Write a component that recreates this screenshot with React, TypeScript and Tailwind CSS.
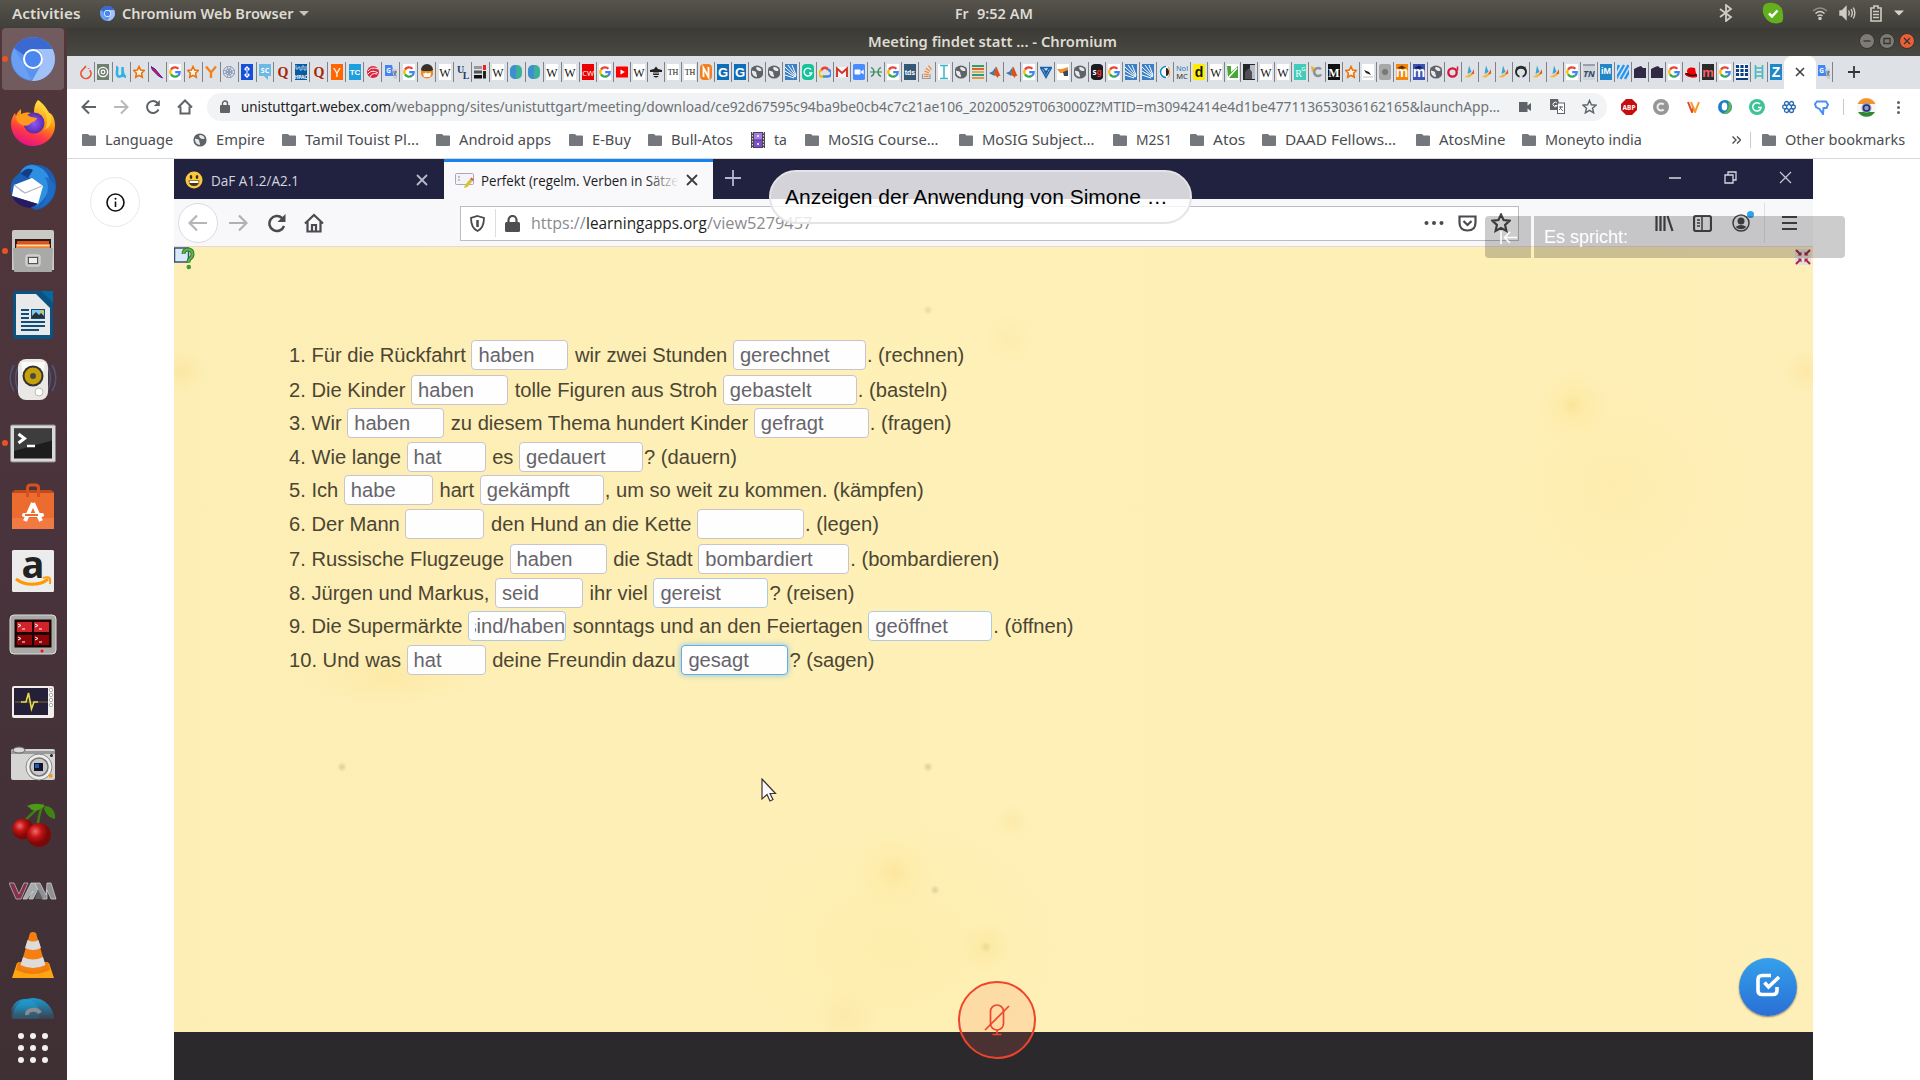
import React, { useLayoutEffect, useRef, useState } from "react";

const UI = "font-['Noto_Sans',sans-serif]";
const ARIAL = "font-['Liberation_Sans',sans-serif]";

/* One line of text, condensed or widened to the width of its box. */
function Fit({ className, children }: { className: string; children: React.ReactNode }) {
  const outer = useRef<HTMLSpanElement>(null);
  const inner = useRef<HTMLSpanElement>(null);
  const [scale, setScale] = useState(1);
  useLayoutEffect(() => {
    if (outer.current && inner.current && inner.current.offsetWidth > 0) {
      setScale(outer.current.clientWidth / inner.current.offsetWidth);
    }
  }, []);
  return (
    <span ref={outer} className={`block shrink-0 whitespace-nowrap ${className}`}>
      <span ref={inner} className="inline-block origin-left" style={{ transform: `scaleX(${scale})` }}>
        {children}
      </span>
    </span>
  );
}

/* ---------- favicons ---------- */

function Letter({ t, fill = "#111", bg, size = 13, serif, y = 12.5, weight = 700 }: { t: string; fill?: string; bg?: string; size?: number; serif?: boolean; y?: number; weight?: number }) {
  return (
    <>
      {bg && <rect width="16" height="16" fill={bg} />}
      <text x="8" y={y} textAnchor="middle" fontSize={size} fontWeight={weight} fill={fill} fontFamily={serif ? "Liberation Serif, serif" : "Liberation Sans, sans-serif"}>
        {t}
      </text>
    </>
  );
}

function Google() {
  return (
    <g fill="none" strokeWidth="2.3">
      <rect width="16" height="16" fill="#fff" />
      <path d="M11.4 4.8A4.7 4.7 0 0 0 4 5.6" stroke="#ea4335" />
      <path d="M4 5.6a4.7 4.7 0 0 0 0 4.8" stroke="#fbbc05" />
      <path d="M4 10.4a4.7 4.7 0 0 0 7 1.2" stroke="#34a853" />
      <path d="M8.2 8.2h4.5c0 1.4-.6 2.6-1.7 3.4" stroke="#4285f4" />
    </g>
  );
}

function Globe() {
  return (
    <g>
      <circle cx="8" cy="8" r="6.6" fill="#5f6368" />
      <path d="M3 6.500C4.500 7.200 7.500 7 7.300 9.200c-.1 1.400 1.100 1.800.7 3.600C5 13 2.600 10.200 3 6.500z" fill="#e8eaed" />
      <path d="M7.400 3.200c2-.4 4.400.8 5.300 3-1.500 1.400-3.500.9-4.200 0-.6-.8-2-1.600-1.100-3z" fill="#e8eaed" />
    </g>
  );
}

const icons: Record<string, React.ReactNode> = {
  flame: <path d="M8 2.200L4.400 6a5 5 0 1 0 7.300.2M10.600 4.300v.8" fill="none" stroke="#ee4c2c" strokeWidth="1.700" />,
  ring: <><rect width="16" height="16" fill="#6f806f" /><circle cx="8" cy="8" r="4.600" fill="none" stroke="#fff" strokeWidth="1.300" /><circle cx="8" cy="8" r="1.800" fill="none" stroke="#fff" strokeWidth="1.200" /></>,
  u: <path d="M3 3c2.500 0 .5 4 1 7 .5 3.500 4.500 3.500 5.500 0V3c0 5 0 9 3.500 10" fill="none" stroke="#2fb1e6" strokeWidth="2.500" />,
  star: <path d="M8 2.500l1.600 3.500 3.700.5-2.700 2.700.7 4L8 11.300l-3.300 1.900.7-4-2.700-2.700 3.700-.5z" fill="#fff3e6" stroke="#e8710a" strokeWidth="1.500" />,
  feather: <path d="M2 2.500l4 2.500 5 6 2.500 3-4-2-6-6z" fill="#d6124a" stroke="#4b1fa8" strokeWidth="1" />,
  g: <Google />,
  y: <path d="M3 2.500l5 6 5-6M8 8v6" fill="none" stroke="#f58220" strokeWidth="2.400" />,
  net: <g fill="none" stroke="#7d8fb0" strokeWidth=".8"><circle cx="8" cy="8" r="5.600" /><circle cx="8" cy="8" r="3" /><path d="M2.500 6l11 4M13.500 6l-11 4M6 2.500l4 11M10 2.500l-4 11" /></g>,
  diamond: <><rect width="16" height="16" fill="#1750d8" /><path d="M8 2l3 3-3 3-3-3zM8 8l3 3-3 3-3-3z" fill="#fff" /><path d="M8 4v3M8 9v3" stroke="#1750d8" /></>,
  sc: <><path d="M0 0h16v12h-5v4l-4-4H0z" fill="#6cb9e6" /><text x="8" y="9" textAnchor="middle" fontSize="7" fontWeight="700" fill="#fff">SC</text></>,
  q: <Letter t="Q" fill="#a82400" size={14} serif />,
  hpac: <><rect width="16" height="16" fill="#0b5a9d" /><path d="M3 1v4h2V3h2v3h2V2h2v4h2V2" fill="none" stroke="#9fd0f2" /><text x="8" y="15" textAnchor="middle" fontSize="4.800" fontWeight="700" fill="#fff">HPAC</text></>,
  yc: <Letter t="Y" fill="#fff" bg="#ff6600" size={12} weight={400} />,
  tc: <Letter t="TC" fill="#fff" bg="#1d9fe0" size={8} y={11} />,
  swirl: <><circle cx="8" cy="8" r="6" fill="#dc2339" /><path d="M3 7c3-4 7-3 10-2M3 10c3-4 7-3 10-1M5 13c1-3 4-4 7-3" stroke="#fff" fill="none" /></>,
  trans: <><path d="M2 1h7l2.500 11H2z" fill="#4285f4" /><path d="M9 5h5v10h-3z" fill="#c6cdd6" /><text x="5.500" y="9" textAnchor="middle" fontSize="6.500" fontWeight="700" fill="#fff">G</text><path d="M10 8h4M12.500 7c0 3-1 4-2 5M11 9l2.500 3" stroke="#5f6368" strokeWidth=".8" fill="none" /></>,
  monk: <><circle cx="8" cy="8" r="6.500" fill="#ef8a1c" /><path d="M2 6a6 6 0 0 1 12 0l-2 1H4z" fill="#35302c" /><path d="M4 9c2 2 2-2 4 0s2-2 4 0l-1 4H5z" fill="#fff" /></>,
  w: <Letter t="W" bg="#fff" size={12} serif weight={400} />,
  ul: <><text x="5.500" y="9" textAnchor="middle" fontSize="10" fontWeight="700" fill="#1d3d6e" fontFamily="Liberation Serif">U</text><text x="11" y="15" textAnchor="middle" fontSize="10" fontWeight="700" fill="#1d3d6e" fontFamily="Liberation Serif">L</text></>,
  bars: <><rect x="2" y="2" width="8" height="3" fill="#999" /><rect x="2" y="6.500" width="8" height="3" fill="#555" /><rect x="2" y="11" width="8" height="3.500" fill="#111" /><rect x="11" y="1" width="3" height="5" fill="#e22" /><rect x="11" y="7" width="3" height="7.500" fill="#222" /></>,
  blob: <><rect x="2" y="1" width="12" height="14" rx="5" fill="#3db09a" /><path d="M8 1q-6 0-6 6v2q0 6 6 6z" fill="#3f8ecf" /></>,
  cw: <><rect width="16" height="16" fill="#ea0000" /><text x="8" y="11.500" textAnchor="middle" fontSize="7.500" fill="#fff">CW</text></>,
  yt: <><rect x="1" y="2.500" width="14" height="11" rx="2" fill="#f00" /><path d="M6.500 5.500v5L10.800 8z" fill="#fff" /></>,
  bee: <><path d="M2 6l4-1 2-2.500L10 5l4 1v2H2z" fill="#222" /><ellipse cx="8" cy="9.500" rx="3" ry="4" fill="#222" /><path d="M5 9h6M5 11.500h6" stroke="#dee1e6" /></>,
  th: <Letter t="TH" bg="#fff" size={8} serif y={11} weight={400} />,
  n: <><rect x="2" width="12" height="16" rx="4" fill="#f08020" /><path d="M5.500 13V4l5 9V3" stroke="#fff" strokeWidth="1.800" fill="none" /></>,
  gb: <Letter t="G" fill="#fff" bg="#0e6eb8" size={13} y={12.800} />,
  globe: <Globe />,
  fan: <><rect width="16" height="16" fill="#3b7fc4" /><path d="M2 3l11 10M2 7l10 6M2 11l9 3M5 1l8 11M9 1l4 10" stroke="#fff" strokeWidth="1" /></>,
  gg: <><rect x="2" width="12" height="16" rx="4" fill="#15c39a" /><path d="M11 5.500a3.900 3.900 0 1 0 .8 3.500H9" fill="none" stroke="#fff" strokeWidth="1.400" /></>,
  cloud: <g fill="none" strokeWidth="2.400"><path d="M4.500 6.500C5.500 3 10 3 11 6" stroke="#ea4335" /><path d="M11 6a3 3 0 0 1 0 6.500H8" stroke="#4285f4" /><path d="M8 12.500H5.500" stroke="#34a853" /><path d="M5.500 12.500a3 3 0 0 1-1-6" stroke="#fbbc05" /></g>,
  gmail: <><rect x="2" y="3" width="12" height="10.500" fill="#f6f6f6" /><path d="M3 13V4.500L8 9l5-4.500V13" fill="none" stroke="#d93025" strokeWidth="1.900" /></>,
  zoom: <><rect x="1.500" width="13" height="16" rx="2.500" fill="#4a8cff" /><rect x="3.500" y="5.500" width="6" height="5" rx="1" fill="#fff" /><path d="M10 7.500l2.700-2v5L10 8.500z" fill="#fff" /></>,
  hx: <path d="M3 3.500c4 1.500 4 7.500 0 9M13 3.500c-4 1.500-4 7.500 0 9M2 8h12" fill="none" stroke="#2e8b57" strokeWidth="1.200" />,
  tds: <Letter t="tds" fill="#fff" bg="#355876" size={7} y={10.500} />,
  so: <g fill="none" strokeWidth="1.200"><path d="M3.500 10v4.500H11V10" stroke="#9a9a9a" /><path d="M5 12.500h4.500M4.800 10l4.800.8M5.500 7l4.500 2M7 4.200l4 3.200M9.500 1.500l3 4.200" stroke="#f48024" /></g>,
  i: <><rect width="16" height="16" fill="#fff" /><path d="M4 1.500h8M4 14.500h8M8 1.500v13" stroke="#37b8c4" strokeWidth="1.500" /></>,
  stripes: <><rect x="2" y="1" width="12" height="2" fill="#36a05a" /><rect x="2" y="4" width="12" height="2" fill="#e35d3a" /><rect x="2" y="7" width="12" height="2" fill="#d7b53a" /><rect x="2" y="10" width="12" height="2" fill="#2b9a9a" /><rect x="2" y="13" width="12" height="2" fill="#e39a3a" /></>,
  matlab: <><path d="M2 9l3.500-1.500L9 2.500l-2 9-2.500-1z" fill="#3c78b4" /><path d="M9 2.500c2 2 3 8 5 9.500-2-.5-2.500 0-3.500 2-1-2-2-3-4-2z" fill="#d9541a" /></>,
  tri: <path d="M2.500 3.500h11L8 13.500zM5.500 5l2.500 5 2.500-5M4 3.500l4 4.500 4-4.500" fill="none" stroke="#1764b0" strokeWidth="1.500" />,
  hand: <><rect width="16" height="16" fill="#fff" /><path d="M2 5h5l6-2v3l-3 3H5z" fill="#f0932b" /><path d="M8 8l5-2v6H9z" fill="#39485a" /></>,
  sg: <><rect x="1.500" width="13" height="16" rx="4.500" fill="#1c1c22" /><text x="8" y="10.500" textAnchor="middle" fontSize="8" fontWeight="700"><tspan fill="#fff">s</tspan><tspan fill="#e33">g</tspan></text></>,
  c: <><circle cx="8" cy="8" r="6" fill="#fff" /><path d="M9 2.500a5.500 5.500 0 1 0 0 11" stroke="#1c8cc7" strokeWidth="1.600" fill="none" /><path d="M9 4c4 0 4 8 0 8z" fill="#30211a" /><path d="M11 3c2.500 2.500 2.500 8 0 10.500" stroke="#e8882d" fill="none" /></>,
  nmc: <><text x="8" y="7" textAnchor="middle" fontSize="7.500" fill="#1f7bb5">Nol</text><text x="8" y="15" textAnchor="middle" fontSize="7.500" fill="#333">MC</text></>,
  d: <Letter t="d" bg="#ffed00" size={14} />,
  leaf: <><rect width="16" height="16" fill="#fff" /><path d="M2 2h4v6L13 2v12H3z" fill="#46a830" /><path d="M3 14L12 4" stroke="#fff" strokeWidth="1.500" /></>,
  photo: <><rect width="16" height="16" fill="#25262b" /><rect x="9" y="1" width="5" height="14" fill="#b9bdc5" /><path d="M4 15V8l4-4 3 4v7z" fill="#4e5055" /></>,
  rg: <><rect width="16" height="16" fill="#40ccb8" /><text x="6.500" y="13" textAnchor="middle" fontSize="10" fill="#fff" fontFamily="Liberation Serif">R</text><text x="11.500" y="6.500" textAnchor="middle" fontSize="6" fill="#fff">G</text></>,
  cg: <><path d="M12 5.200a4 4 0 1 0 .2 5.300" stroke="#8e9298" strokeWidth="2.600" fill="none" /><path d="M2 2l4 2-3 4z" fill="#f0b020" /></>,
  m: <Letter t="M" fill="#fff" bg="#111" size={12} serif />,
  pen: <><rect width="16" height="16" fill="#fff" /><path d="M4 6l5 2 2 3-5-2z" fill="#222" /><path d="M3 13h10" stroke="#999" strokeWidth=".6" /></>,
  blur: <><rect x="2" width="12" height="16" rx="2" fill="#a8a8a8" /><circle cx="8" cy="8" r="3" fill="#777" /></>,
  moo: <><Letter t="m" fill="#fff" bg="#f2870c" size={14} y={13} /><path d="M3 4l5-2.500L12 4 8 5z" fill="#5a2e00" /></>,
  mob: <><Letter t="m" fill="#fff" bg="#3e51b5" size={14} y={13} /><path d="M3 4l5-2.500L12 4 8 5z" fill="#152050" /></>,
  o: <><circle cx="7.500" cy="8.500" r="4.200" fill="none" stroke="#d8143a" strokeWidth="2.300" /><path d="M12.500 2.500v4" stroke="#d8143a" strokeWidth="1.500" /></>,
  bird: <><path d="M7 1.500l2.500 6.500L5.500 10z" fill="#38a6d0" /><path d="M2.500 13l8-4.500 2.500.5-6 4.500z" fill="#f4b73a" /><path d="M12 5v4.500l-3 1z" fill="#e0562b" /></>,
  git: <><circle cx="8" cy="7.800" r="5" fill="none" stroke="#24292e" strokeWidth="2" /><path d="M3.500 2.500v4h9v-4l-2.500 1H6z" fill="#24292e" /><path d="M5 5.500q3-1.500 6 0 1.200 4.500-3 4.500T5 5.500z" fill="#dee1e6" /><path d="M6.500 15v-4h3v4z" fill="#dee1e6" /></>,
  tn: <><rect width="16" height="16" fill="#d0d5dc" /><path d="M2 1h12" stroke="#5f6b7a" /><text x="8" y="13" textAnchor="middle" fontSize="9" fontStyle="italic" fontWeight="700" fill="#2d4a6b">TN</text></>,
  im: <Letter t="iM" fill="#fff" bg="#2187c6" size={9} y={10} />,
  hash: <path d="M1 15L9 1M5.500 15l8-14M10 15l5-9M1 7l3-6" stroke="#2196f3" strokeWidth="2.400" />,
  box: <path d="M2 5l4-2 3-1 2 2h3v10H2z" fill="#322a44" />,
  hat: <><path d="M2 9c0 3 5 5 12 4 1-2 0-3-2-4z" fill="#111" /><path d="M4 8c0-5 4-5 8-4l1 6c-3 2-7 1-9-2z" fill="#e00" /><path d="M2 9c1 3 7 5 12 3" stroke="#e00" strokeWidth="1.500" fill="none" /></>,
  mm: <Letter t="m" fill="#ff5a5f" bg="#2b2b2e" size={13} y={13} />,
  grid: <><rect width="16" height="16" fill="#fff" /><path d="M3.500 1v11M8 1v11M12.500 1v11" stroke="#0a3f86" strokeWidth="3.200" /><path d="M0 4.500h16M0 8.500h16M0 12.500h16" stroke="#fff" /><rect y="14" width="16" height="2" fill="#0a3f86" /></>,
  ladder: <path d="M4.500 1v14M11.500 1v14M4.500 4h7M4.500 8h7M4.500 12h7" stroke="#45b8c0" strokeWidth="1.600" fill="none" />,
  z: <Letter t="Z" fill="#fff" bg="#1f88c9" size={14} y={13} />,
};

const wideTabs = "flame ring u star feather g star y net diamond sc q hpac q yc tc swirl trans g monk w ul bars w blob blob w w".split(" ");
const slimTabs = "cw g yt w bee th th n gb gb globe globe fan gg cloud gmail zoom hx g tds so i globe stripes matlab matlab g tri hand globe sg g fan fan c nmc d w leaf photo w w rg cg m star pen blur moo mob globe o bird bird bird git bird bird g tn im hash box box g hat mm g grid ladder z".split(" ");

function Fav({ k }: { k: string }) {
  return (
    <svg className="h-4 w-3 shrink-0" viewBox="0 0 16 16" preserveAspectRatio="xMidYMid slice">
      {icons[k]}
    </svg>
  );
}

function Chromium({ className }: { className: string }) {
  return (
    <svg className={className} viewBox="0 0 44 44">
      <circle cx="22" cy="22" r="22" fill="#5b92ee" />
      <path d="M3 11A22 22 0 0 1 41.500 12H22a10 10 0 0 0-9 6z" fill="#3a69d2" />
      <path d="M3 11l9.500 16L20 43A22 22 0 0 1 3 11z" fill="#6aa0f4" />
      <path d="M41.500 12A22 22 0 0 1 21 44l9.500-17A10 10 0 0 0 27 13l-5-1z" fill="#a2c1f9" />
      <circle cx="22" cy="22" r="10" fill="#fff" />
      <circle cx="22" cy="22" r="8" fill="#4a86f0" />
    </svg>
  );
}

/* ---------- dock ---------- */

const dock: { art: React.ReactNode; on?: boolean; active?: boolean }[] = [
  { on: true, active: true, art: <Chromium className="size-11" /> },
  {
    art: (
      <svg className="size-12" viewBox="0 0 48 48">
        <defs>
          <linearGradient id="ff" x1=".8" y1="0" x2=".4" y2="1"><stop offset="0" stopColor="#fff44f" /><stop offset=".45" stopColor="#ff980e" /><stop offset=".75" stopColor="#ff3647" /><stop offset="1" stopColor="#e31587" /></linearGradient>
          <radialGradient id="ffp"><stop offset="0" stopColor="#9059ff" /><stop offset="1" stopColor="#5b2ba8" /></radialGradient>
        </defs>
        <path d="M29 1c7 5 8 8 11 13 3 0 6 6 6 12 0 12-10 21-22 21S2 37 2 25c0-5 2-8 4-11l1 3c1-4 4-6 5-7v5c6-2 10-2 13 1 0-6 0-10 4-15z" fill="url(#ff)" />
        <circle cx="25" cy="24" r="10.500" fill="url(#ffp)" />
        <path d="M7 17c6-3 11-2 15 1l6 1c-1 4-6 4-7 6-3 3-9 2-13-3z" fill="#ff9a1f" />
        <path d="M30 1c2 9 8 11 8 22 0 4-2 7-3 8 6-2 9-8 7-14S33 7 30 1z" fill="#ffd436" opacity=".75" />
      </svg>
    ),
  },
  {
    art: (
      <svg className="size-12" viewBox="0 0 48 48">
        <path d="M12 8C15 2 22 0 27 2c10-1 19 7 20 19 1 13-8 24-20 26L4 36C0 28 1 19 6 14z" fill="#1b5fb5" />
        <path d="M12 8c4-6 12-8 18-4 8 3 14 14 9 25-3 7-9 12-12 15 4-10 5-20-3-27-4-4-10-3-12-9z" fill="#2f8fe0" />
        <path d="M12 11c2-4 7-7 12-4l-5 8z" fill="#123e86" />
        <path d="M5 22l18-7 11 8-5 18L3 33z" fill="#fff" />
        <path d="M5 22l11 8 17-7M16 30l-5-3" fill="none" stroke="#b4b9c4" strokeWidth="1.200" />
        <path d="M3 33l26 8-8 4C12 44 6 40 3 33z" fill="#281a62" />
        <path d="M36 14c5 8 4 20-6 31 10-3 16-12 16-22-2-4-6-8-10-9z" fill="#1d6cc5" />
      </svg>
    ),
  },
  {
    on: true,
    art: (
      <svg className="size-12" viewBox="0 0 48 48">
        <path d="M3 5q0-2 2-2h38q2 0 2 2v38H3z" fill="#c9c9c7" />
        <path d="M6 12h36v12H6z" fill="#2c1a14" />
        <path d="M8 14h32v4H8z" fill="#d9531e" /><path d="M7 17h34v6H7z" fill="#f08039" /><path d="M8 18.500h32" stroke="#ffd9a8" strokeWidth="1.500" />
        <path d="M4 21h40l-1 23q0 1-1 1H6q-1 0-1-1z" fill="#a9a9a7" />
        <rect x="17" y="28" width="14" height="11" rx="2" fill="#b8b8b6" stroke="#e4e4e2" />
        <rect x="19.500" y="30.500" width="9" height="6" fill="#eee" stroke="#555" />
      </svg>
    ),
  },
  {
    art: (
      <svg className="size-12" viewBox="0 0 48 48">
        <path d="M6 0h26l12 12v33q0 3-3 3H7q-3 0-3-3V2z" fill="#0a5282" /><path d="M32 0h12v12z" fill="#0369a3" />
        <path d="M7 3h20l14 14v27H7z" fill="#e9e9e9" />
        <path d="M12 19h8M12 23h8M12 27h8M12 31h24M12 35h24M12 39h18" stroke="#104f7c" strokeWidth="2" />
        <rect x="22" y="18" width="14" height="10" fill="#104f7c" /><rect x="23" y="19" width="12" height="8" fill="#83c7ec" /><path d="M23 27v-2l4-4 3 3 2-2 3 3v2z" fill="#273238" /><circle cx="33" cy="20.500" r="1.500" fill="#f1c40f" />
      </svg>
    ),
  },
  {
    art: (
      <svg className="size-12" viewBox="0 0 48 48">
        <path d="M5 10c-5 8-5 18 0 26M9 12c-3 7-3 16 0 23M43 10c5 8 5 18 0 26M39 12c3 7 3 16 0 23" fill="none" stroke="#4d6698" strokeWidth="1.500" opacity=".7" />
        <rect x="9" y="4" width="30" height="41" rx="8" fill="#e9e8e4" /><path d="M12 7h24l-2 12H14z" fill="#fbfbfa" />
        <circle cx="24" cy="21" r="10.500" fill="#333" /><circle cx="24" cy="21" r="8.500" fill="#c5a00a" /><circle cx="24" cy="21" r="3" fill="#4a4a42" /><circle cx="30" cy="37" r="4" fill="#fff" stroke="#bbb" />
      </svg>
    ),
  },
  {
    on: true,
    art: (
      <svg className="size-12" viewBox="0 0 48 48">
        <rect x="1.500" y="6" width="45" height="37" rx="1.500" fill="#d9d9d7" stroke="#888" /><rect x="5" y="9.500" width="38" height="30" fill="#1d1d1d" /><path d="M5 9.500h38v12L5 32z" fill="#3d3d3d" />
        <path d="M9.500 15l6 4.500-6 4.500" fill="none" stroke="#fff" strokeWidth="3" /><path d="M18 27h8" stroke="#fff" strokeWidth="2.500" />
      </svg>
    ),
  },
  {
    art: (
      <svg className="size-12" viewBox="0 0 48 48">
        <path d="M3 9l3-2h36l3 2v37H3z" fill="#c04a1c" /><path d="M3 10h42v36H3z" fill="#ec6b2f" /><path d="M3 35h42v11H3z" fill="#f07a42" />
        <path d="M18.500 14V5q0-3 3-3h5q3 0 3 3v9" fill="none" stroke="#d9501e" strokeWidth="3" />
        <path d="M24 20l-8 18M24 20l8 18" stroke="#fff" strokeWidth="4" /><path d="M15 32h18" stroke="#fff" strokeWidth="4" strokeLinecap="round" /><path d="M16 32h13" stroke="#ec6b2f" strokeWidth="2" />
      </svg>
    ),
  },
  {
    art: (
      <svg className="size-12" viewBox="0 0 48 48">
        <rect x="3" y="3" width="42" height="42" rx="1.500" fill="#ececec" />
        <text x="24" y="31" textAnchor="middle" fontSize="38" fontWeight="700" fill="#222" fontFamily="Open Sans">a</text>
        <path d="M7 32c9 7 24 7 32 0" fill="none" stroke="#f90" strokeWidth="3" /><path d="M34 31c6-2 8-1 7 6" fill="none" stroke="#f90" strokeWidth="2" />
      </svg>
    ),
  },
  {
    art: (
      <svg className="size-12" viewBox="0 0 48 48">
        <rect x="1" y="4" width="46" height="39" rx="4" fill="#a9aaa6" stroke="#dcdcda" /><rect x="5.500" y="8.500" width="37" height="28" fill="#1b0203" />
        <path d="M8 11h15v10H8zM25 11h15v10H25z" fill="#d2232a" /><path d="M8 24h15v10H8zM25 24h15v10H25z" fill="#8d0308" />
        <path d="M9 13l3 1.500L9 16M26 13l3 1.500-3 1.500M9 26l3 1.500L9 29M26 26l3 1.500-3 1.500M13 18h3M30 18h3M13 31h3M30 31h3" stroke="#fff" fill="none" />
        <circle cx="33" cy="40" r="1.500" fill="#e11" />
      </svg>
    ),
  },
  {
    art: (
      <svg className="size-12" viewBox="0 0 48 48">
        <rect x="3" y="11" width="42" height="32" rx="2" fill="#f2efeb" /><rect x="5" y="13" width="34" height="27" fill="#252038" />
        <path d="M6 27h33" stroke="#7d6b2c" /><path d="M12 27h5l2.500-9 3 16 2.500-7h4" fill="none" stroke="#e6dc4a" strokeWidth="1.600" />
        <g fill="#fff" stroke="#8d8d8d" strokeWidth=".7"><circle cx="42" cy="15" r="1.700" /><circle cx="42" cy="20" r="1.700" /><circle cx="42" cy="25" r="1.700" /><circle cx="42" cy="30" r="1.700" /></g>
      </svg>
    ),
  },
  {
    art: (
      <svg className="size-12" viewBox="0 0 48 48">
        <rect x="2" y="10" width="44" height="31" rx="2" fill="#d5d5d3" /><path d="M2 12h44v3H2z" fill="#999" /><ellipse cx="10" cy="11" rx="6" ry="3" fill="#d7d7d5" stroke="#666" />
        <circle cx="30" cy="28" r="13" fill="#ededeb" stroke="#888" /><circle cx="30" cy="28" r="9" fill="#c8c8c6" stroke="#777" strokeWidth="1.500" /><rect x="25" y="24" width="9" height="8" fill="#10142a" /><rect x="26" y="25" width="4" height="4" fill="#2659b0" />
        <rect x="40" y="35" width="3.500" height="3.500" fill="#f0a020" /><circle cx="42.500" cy="16.500" r="1.500" fill="#222" />
      </svg>
    ),
  },
  {
    art: (
      <svg className="size-12" viewBox="0 0 48 48">
        <defs><radialGradient id="ch" cx=".35" cy=".35"><stop offset="0" stopColor="#f26a6a" /><stop offset=".5" stopColor="#c31414" /><stop offset="1" stopColor="#7d0808" /></radialGradient></defs>
        <path d="M15 19c6-7 11-12 18-16-2 6-4 12-4 19" fill="none" stroke="#3f7e12" strokeWidth="2.500" />
        <path d="M18 3c7-3 13-3 18 0-5 4-12 7-15 2z" fill="#4c9a16" /><path d="M36 3c7 0 11 6 10 13-6-1-9-5-11-10z" fill="#3d8412" />
        <circle cx="14" cy="26" r="10.500" fill="url(#ch)" /><circle cx="30" cy="32" r="12" fill="url(#ch)" />
      </svg>
    ),
  },
  {
    art: (
      <svg className="size-12" viewBox="0 0 48 48">
        <path d="M0 16h5l5 11 5-11h4l-7 16H7z" fill="#8a2f49" stroke="#aaa" strokeWidth=".9" />
        <path d="M14 32l8-16h4l3 6-5 10h-4l4-8-6 8z" fill="#a7aaac" stroke="#d6d8d9" strokeWidth=".7" />
        <path d="M26 16h5l6 12 1-12h4l5 16h-5l-4-9v9h-5z" fill="#8f9294" stroke="#d6d8d9" strokeWidth=".7" />
        <path d="M29 22l5 10h-8z" fill="#606365" />
      </svg>
    ),
  },
  {
    art: (
      <svg className="size-12" viewBox="0 0 48 48">
        <path d="M8 32h32l5 15H3z" fill="#ffa514" /><path d="M9 31h30l2 8q-17 8-34 0z" fill="#ef7d0e" />
        <path d="M21 2q3-2 6 0l10 35q-13 7-26 0z" fill="#f57f11" /><path d="M18.500 9q5.500 3 11 0l2.500 8q-8 4-16 0z" fill="#dcdcdc" /><path d="M14 26q10 5 20 0l2.500 8q-12.500 6-25 0z" fill="#dcdcdc" />
      </svg>
    ),
  },
];

function Dock() {
  return (
    <aside className="flex w-[67px] shrink-0 flex-col overflow-hidden bg-linear-to-b from-[#51373a] via-[#49333c] to-[#3f3034]">
      {dock.map((d, i) => (
        <div key={i} className="flex h-16 shrink-0 items-start">
          <div className="flex h-[62px] w-0.5 items-center">{d.on && <i className="relative z-10 ml-0.5 h-1.5 w-1.5 shrink-0 rounded-full bg-[#e95420]" />}</div>
          <div className={`flex h-[62px] w-[62px] items-center justify-center rounded ${d.active ? "bg-[#725b5e]" : ""}`}>{d.art}</div>
        </div>
      ))}
      <div className="ml-[9px] h-[31px] overflow-hidden pt-2">
        <svg className="h-12 w-12" viewBox="0 0 48 48">
          <defs><linearGradient id="fade" x1="0" y1="0" x2="0" y2="1"><stop offset="0" stopColor="#1c9ad0" /><stop offset=".5" stopColor="#1c9ad0" stopOpacity=".15" /></linearGradient></defs>
          <circle cx="16" cy="17" r="14" fill="url(#fade)" /><circle cx="24" cy="23" r="21" fill="url(#fade)" /><path d="M31 17c-3-5-14-4-13 2" fill="none" stroke="#8c8b90" strokeWidth="4" />
        </svg>
      </div>
      <div className="ml-[18px] mt-[14px] grid w-[30px] grid-cols-3 gap-x-1.5 gap-y-1.5">
        {Array.from({ length: 9 }, (_, i) => <i key={i} className="size-1.5 rounded-full bg-[#f2f1f0]" />)}
      </div>
    </aside>
  );
}

/* ---------- system bars ---------- */

function TopBar() {
  return (
    <header className={`flex h-7 shrink-0 items-center bg-linear-to-b from-[#57544c] to-[#403f3a] pb-0.5 pl-3 text-[14px] font-semibold text-[#dfdbd2] ${UI}`}>
      <Fit className="w-[68px]">Activities</Fit>
      <Chromium className="ml-5 size-[15px]" />
      <Fit className="ml-[7px] w-[172px]">Chromium Web Browser</Fit>
      <svg className="ml-[5px] h-[5px] w-2.5" viewBox="0 0 10 5"><path d="M0 0h10L5 5z" fill="#c8c4bc" /></svg>
      <div className="ml-[646px] flex w-[78px] justify-between"><Fit className="w-3.5">Fr</Fit><Fit className="w-[56px]">9:52 AM</Fit></div>
      <svg className="ml-[684px] size-[18px]" viewBox="0 0 18 18" fill="none" stroke="#cfccc4" strokeWidth="1.800"><path d="M3 5l11 8-5 4V1l5 4L3 13" /></svg>
      <svg className="ml-[27px] size-[22px]" viewBox="0 0 22 22"><path d="M3 2c7-3 15 0 17 5 1 3 2 10 0 13-6 3-14 1-17-5C0 11 0 5 3 2z" fill="#62b01e" /><path d="M7 11.500l3 3 5.500-6" fill="none" stroke="#fff" strokeWidth="2.500" /></svg>
      <svg className="ml-[28px] size-4" viewBox="0 0 16 16" fill="none" stroke="#cfccc4" strokeWidth="1.600"><path d="M1 6q7-6 14 0" opacity=".5" /><path d="M3.500 8.500q4.500-4 9 0" /><path d="M5.500 11q2.500-2 5 0" /><circle cx="8" cy="13.500" r="1" fill="#cfccc4" /></svg>
      <svg className="ml-[11px] h-4 w-[17px]" viewBox="0 0 17 16" fill="none" stroke="#cfccc4" strokeWidth="1.400"><path d="M1 6h2l4-4v12l-4-4H1z" fill="#cfccc4" /><path d="M9.500 5.500q1.500 2.500 0 5M12 4q2.500 4 0 8M14.300 2.500q3 5.500 0 11" /></svg>
      <svg className="ml-[14px] h-[17px] w-3" viewBox="0 0 12 17" fill="none" stroke="#cfccc4" strokeWidth="1.600"><path d="M1 3h3V1h4v2h3v13H1z" /><path d="M3 6.500h6M3 9.500h6M3 12.500h6" /></svg>
      <svg className="ml-[12px] h-[6px] w-2.5" viewBox="0 0 10 5"><path d="M0 0h10L5 5z" fill="#d8d4cc" /></svg>
    </header>
  );
}

function WinButton({ d, close }: { d: string; close?: boolean }) {
  return (
    <div className={`flex size-4 items-center justify-center rounded-full border border-[#35342f] ${close ? "bg-[#ea5f35]" : "bg-[#7d7b73]"}`}>
      <svg className="size-2.5" viewBox="0 0 10 10"><path d={d} fill="none" stroke="#35342f" strokeWidth="1.300" /></svg>
    </div>
  );
}

function TitleBar() {
  return (
    <div className={`flex h-7 shrink-0 items-center bg-linear-to-b from-[#3b3a36] to-[#4a4842] pb-0.5 pl-[801px] text-[14px] font-semibold text-[#dfdbd2] ${UI}`}>
      <Fit className="w-[249px]">Meeting findet statt ... - Chromium</Fit>
      <div className="ml-[742px] flex gap-1">
        <WinButton d="M1.500 5h7" /><WinButton d="M2 2.500h6v5H2z" /><WinButton d="M2 2l6 6M8 2l-6 6" close />
      </div>
    </div>
  );
}

/* ---------- browser chrome ---------- */

function TabStrip() {
  return (
    <div className="flex h-[33px] shrink-0 items-center bg-[#dee1e6] pb-0.5 pl-[10px]">
      {wideTabs.map((k, i) => (
        <div key={i} className="flex h-5 w-[17.960px] shrink-0 items-center border-r border-[#7f8288] pl-[2.500px]"><Fav k={k} /></div>
      ))}
      {slimTabs.map((k, i) => (
        <div key={i} className={`flex h-5 w-[16.980px] shrink-0 items-center border-r pl-0.5 ${i === slimTabs.length - 1 ? "border-transparent" : "border-[#7f8288]"}`}><Fav k={k} /></div>
      ))}
      <div className="-mb-0.5 flex h-[33px] w-[32px] shrink-0 items-center justify-center rounded-t-lg bg-white pb-0.5">
        <svg className="size-2.5" viewBox="0 0 10 10"><path d="M1 1l8 8M9 1l-8 8" stroke="#3c4043" strokeWidth="1.600" /></svg>
      </div>
      <div className="flex h-5 w-[17px] shrink-0 items-center border-r border-[#7f8288] pl-0.5"><Fav k="trans" /></div>
      <svg className="ml-[15px] size-3 shrink-0" viewBox="0 0 12 12"><path d="M6 0v12M0 6h12" stroke="#33363a" strokeWidth="1.800" /></svg>
    </div>
  );
}

function Cell({ children }: { children: React.ReactNode }) {
  return <div className="flex w-8 shrink-0 items-center justify-center">{children}</div>;
}

function Toolbar() {
  const s = { fill: "none", stroke: "#5f6368", strokeWidth: 2 };
  return (
    <div className={`flex h-9 shrink-0 items-center bg-white pl-1.5 text-[14px] ${UI}`}>
      <Cell><svg className="size-4" viewBox="0 0 16 16" {...s}><path d="M15 8H2M8 1.500L1.500 8 8 14.500" /></svg></Cell>
      <Cell><svg className="size-4 opacity-45" viewBox="0 0 16 16" {...s}><path d="M1 8h13M8 1.500L14.500 8 8 14.500" /></svg></Cell>
      <Cell><svg className="size-4" viewBox="0 0 16 16" {...s}><path d="M13.500 10.500A6 6 0 1 1 12.500 4L14 5.500" /><path d="M14.800 1v6h-6z" fill="#5f6368" stroke="none" /></svg></Cell>
      <Cell><svg className="size-4" viewBox="0 0 16 16" {...s}><path d="M1 8.500L8 1.500l7 7M3.500 7.500v7h9v-7" /></svg></Cell>
      <div className="ml-1.5 flex h-7 w-[1400px] shrink-0 items-center rounded-full bg-[#f1f3f4] pb-px pl-[13px]">
        <svg className="h-[13px] w-2.5" viewBox="0 0 10 13"><rect y="5" width="10" height="8" rx="1" fill="#5f6368" /><path d="M2.500 6V3.500a2.500 2.500 0 0 1 5 0V6" fill="none" stroke="#5f6368" strokeWidth="1.400" /></svg>
        <Fit className="ml-[11px] w-[150px] text-[#202124]">unistuttgart.webex.com</Fit>
        <Fit className="w-[1109px] text-[#6d7175]">/webappng/sites/unistuttgart/meeting/download/ce92d67595c94ba9be0cb4c7c21ae106_20200529T063000Z?MTID=m30942414e4d1be477113653036162165&launchApp…</Fit>
        <div className="ml-[9px] flex">
          <Cell><svg className="h-2.5 w-3" viewBox="0 0 12 10"><path d="M0 0h8.500v3.500L12 1v8L8.500 6.500V10H0z" fill="#5f6368" /></svg></Cell>
          <Cell><svg className="size-[15px]" viewBox="0 0 15 15"><path d="M0 0h8l2.500 11H0z" fill="#5f6368" /><rect x="7.500" y="4" width="7" height="10.500" fill="#fff" stroke="#5f6368" /><path d="M9 8h4M11 7q0 3-2 4M10 9l3 3" stroke="#5f6368" fill="none" /><path d="M7 4a2.200 2.200 0 1 0 .2 2.500H5" stroke="#fff" fill="none" /></svg></Cell>
          <Cell><svg className="size-[15px]" viewBox="0 0 16 16"><path d="M8 1.500l2 4.700 5 .4-3.800 3.300 1.200 4.900L8 12.200l-4.400 2.600 1.200-4.900L1 6.600l5-.4z" fill="none" stroke="#5f6368" strokeWidth="1.500" /></svg></Cell>
        </div>
      </div>
      <div className="ml-1.5 flex">
        <Cell><svg className="size-4" viewBox="0 0 16 16"><path d="M5 0h6l5 5v6l-5 5H5l-5-5V5z" fill="#c70d0d" /><text x="8" y="10.500" textAnchor="middle" fontSize="6.500" fontWeight="700" fill="#fff">ABP</text></svg></Cell>
        <Cell><svg className="size-4" viewBox="0 0 16 16"><circle cx="8" cy="8" r="8" fill="#969696" /><path d="M10.700 5.500a3.600 3.600 0 1 0 0 5" fill="none" stroke="#eee" strokeWidth="2" /></svg></Cell>
        <Cell><svg className="h-3 w-[13px]" viewBox="0 0 13 12" fill="none" strokeWidth="2"><path d="M1 1l4 10 1.500-5" stroke="#e8452c" /><path d="M4 1l4 10 4-10" stroke="#f59a22" /></svg></Cell>
        <Cell><svg className="size-[14px]" viewBox="0 0 14 14"><circle cx="7" cy="7" r="7" fill="#1d7fc9" /><path d="M10 .8a7 7 0 0 1-6 12.600C9 13 12 8 10 .8z" fill="#5fb946" /><ellipse cx="6.500" cy="6.500" rx="2.800" ry="4" fill="#fff" /></svg></Cell>
        <Cell><svg className="size-4" viewBox="0 0 16 16"><circle cx="8" cy="8" r="8" fill="#3cc396" /><path d="M11 5a4.200 4.200 0 1 0 1.100 3.500H9" fill="none" stroke="#fff" strokeWidth="1.500" /></svg></Cell>
        <Cell><svg className="size-[14px]" viewBox="0 0 14 14" fill="none" stroke="#2a6db4" strokeWidth="1.300"><circle cx="4.500" cy="3.500" r="2" /><circle cx="9.500" cy="3.500" r="2" /><circle cx="2.700" cy="7" r="2" /><circle cx="11.300" cy="7" r="2" /><circle cx="4.500" cy="10.500" r="2" /><circle cx="9.500" cy="10.500" r="2" /></svg></Cell>
        <Cell><svg className="size-[15px]" viewBox="0 0 15 15"><path d="M3 1.500h9l2 3-1.500 3.500H9.500L9 14 5.500 9 2 7 1 4z" fill="none" stroke="#4a90f2" strokeWidth="2" /></svg></Cell>
      </div>
      <i className="ml-1.5 h-4 w-px bg-[#c6c9cd]" />
      <svg className="ml-3 size-[21px]" viewBox="0 0 21 21"><circle cx="10.500" cy="10.500" r="10" fill="#f6f6f6" /><path d="M1.500 7a10 10 0 0 1 18 0z" fill="#f5942a" /><path d="M2 15a10 10 0 0 0 17 0z" fill="#2c8a2c" /><circle cx="10.500" cy="11" r="5" fill="#8d9bc8" /><circle cx="10.500" cy="11" r="3" fill="none" stroke="#22306e" strokeWidth="1.500" /></svg>
      <svg className="ml-5 h-[13px] w-[3px]" viewBox="0 0 3 13" fill="#5f6368"><circle cx="1.500" cy="1.500" r="1.500" /><circle cx="1.500" cy="6.500" r="1.500" /><circle cx="1.500" cy="11.500" r="1.500" /></svg>
    </div>
  );
}

const marks = [
  { t: "Language", box: "w-[111px]", w: "w-[68px]" },
  { t: "Empire", box: "w-[89px]", w: "w-[49px]", icon: "globe" },
  { t: "Tamil Touist Pl…", box: "w-[154px]", w: "w-[114px]" },
  { t: "Android apps", box: "w-[133px]", w: "w-[92px]" },
  { t: "E-Buy", box: "w-[79px]", w: "w-[39px]" },
  { t: "Bull-Atos", box: "w-[103px]", w: "w-[62px]" },
  { t: "ta", box: "w-[54px]", w: "w-[13px]", icon: "film" },
  { t: "MoSIG Course…", box: "w-[154px]", w: "w-[110px]" },
  { t: "MoSIG Subject…", box: "w-[154px]", w: "w-[112px]" },
  { t: "M2S1", box: "w-[77px]", w: "w-[36px]" },
  { t: "Atos", box: "w-[72px]", w: "w-[32px]" },
  { t: "DAAD Fellows…", box: "w-[154px]", w: "w-[111px]" },
  { t: "AtosMine", box: "w-[106px]", w: "w-[66px]" },
  { t: "Moneyto india", box: "w-[212px]", w: "w-[97px]" },
];

function MarkIcon({ icon }: { icon?: string }) {
  if (icon === "globe") return <svg className="-ml-px size-4" viewBox="0 0 16 16"><Globe /></svg>;
  if (icon === "film")
    return <svg className="-ml-px size-4" viewBox="0 0 16 16"><rect x="1" width="14" height="16" fill="#4b4453" /><rect x="4" y="1" width="8" height="6.500" fill="#a47be8" /><rect x="4" y="8.500" width="8" height="6.500" fill="#7b50d0" /><path d="M2.500 0v16M13.500 0v16" stroke="#ddd" strokeDasharray="1.500 1.500" /><circle cx="8" cy="4" r="1" fill="#fff" /><circle cx="8" cy="12" r="1" fill="#fff" /></svg>;
  return <svg className="h-3 w-3.5" viewBox="0 0 14 12"><path d="M1 0h5l1.500 1.500H13q1 0 1 1V11q0 1-1 1H1q-1 0-1-1V1q0-1 1-1z" fill="#74777b" /></svg>;
}

function Mark({ t, box, w, icon }: { t: string; box: string; w: string; icon?: string }) {
  return (
    <div className={`flex shrink-0 items-center ${box}`}>
      <div className="flex w-[23px] shrink-0"><MarkIcon icon={icon} /></div>
      <Fit className={w}>{t}</Fit>
    </div>
  );
}

function Bookmarks() {
  return (
    <div className={`flex h-[34px] shrink-0 items-center border-b border-[#d6d8db] bg-white pb-1 pl-[15px] text-[15px] text-[#4a4d51] ${UI}`}>
      {marks.map((m) => <Mark key={m.t} {...m} />)}
      <svg className="-ml-0.5 h-2 w-[9px]" viewBox="0 0 9 8"><path d="M.5.500L4 4 .5 7.500M5 .500L8.500 4 5 7.500" fill="none" stroke="#4a4d51" strokeWidth="1.400" /></svg>
      <i className="ml-[9px] mr-[11px] h-4 w-px bg-[#c6c9cd]" />
      <Mark t="Other bookmarks" box="w-[145px]" w="w-[120px]" />
    </div>
  );
}

/* ---------- shared application window ---------- */

function Cross({ className, color }: { className: string; color: string }) {
  return <svg className={`shrink-0 ${className}`} viewBox="0 0 12 12"><path d="M1 1l10 10M11 1L1 11" stroke={color} strokeWidth="1.800" /></svg>;
}

function FoxTabs() {
  return (
    <div className="flex h-10 shrink-0 items-stretch bg-[#21223f] font-['Open_Sans',sans-serif] text-[14px]">
      <div className="flex w-[270px] shrink-0 items-center pl-[11px] pt-0.5 text-[#d5d5e0]">
        <svg className="size-[18px]" viewBox="0 0 18 18"><circle cx="9" cy="9" r="8.500" fill="#f7c93c" /><path d="M3.500 9.500h11q-.5 5.500-5.500 5.500t-5.500-5.500z" fill="#4a2f1c" /><path d="M4.500 10h9v2h-9z" fill="#fff" /><ellipse cx="6" cy="6" rx="1.300" ry="2" fill="#3b2a1a" /><ellipse cx="12" cy="6" rx="1.300" ry="2" fill="#3b2a1a" /></svg>
        <Fit className="ml-[8px] w-[88px]">DaF A1.2/A2.1</Fit>
        <Cross className="ml-[117px] size-3" color="#b9b9cc" />
      </div>
      <div className="flex w-[269px] shrink-0 items-center border-t-[3px] border-[#1583f0] bg-[#f9f8fa] pb-px pl-[11px] text-[#1b1b1f]">
        <svg className="h-[17px] w-5" viewBox="0 0 20 17"><rect x=".5" y="1.500" width="18" height="11" rx="1" fill="#f4f4f8" stroke="#a9a9b8" /><path d="M3 5h2M3 8h2" stroke="#888" /><path d="M9 16l1-3 5-6 2.500 2-5 6z" fill="#d4c332" /><path d="M15 7l1.500-1.500 2.500 2L17.500 9z" fill="#e0555a" /></svg>
        <div className="relative ml-1.5 w-[198px]">
          <Fit className="w-[198px]">Perfekt (regelm. Verben in Sätze</Fit>
          <div className="absolute inset-y-0 right-0 w-8 bg-linear-to-r from-[#f9f8fa00] to-[#f9f8fa]" />
        </div>
        <Cross className="ml-[7px] size-3" color="#3d3d42" />
      </div>
      <div className="flex items-center pb-0.5 pl-3"><svg className="size-4" viewBox="0 0 16 16"><path d="M8 0v16M0 8h16" stroke="#b6b6cf" strokeWidth="1.800" /></svg></div>
      <div className="ml-auto flex items-center pb-[3px] pr-[21px]">
        <svg className="size-3" viewBox="0 0 12 12"><path d="M0 6h12" stroke="#e6e6ee" strokeWidth="1.400" /></svg>
        <svg className="ml-[43px] size-[13px]" viewBox="0 0 13 13" fill="none" stroke="#d6d6e2" strokeWidth="1.300"><path d="M1 4h8v8H1zM4 4V1h8v8H9" /></svg>
        <svg className="ml-[42px] size-[13px]" viewBox="0 0 13 13"><path d="M1 1l11 11M12 1L1 12" stroke="#c7c7d4" strokeWidth="1.200" /></svg>
      </div>
    </div>
  );
}

function FoxNav() {
  const s = { fill: "none", stroke: "#4a4a4f", strokeWidth: 2.2 };
  return (
    <div className="flex h-12 shrink-0 items-center border-b border-[#e2dcd8] bg-[#f8f7f9] pl-1 pt-px font-['Open_Sans',sans-serif] text-[16px]">
      <div className="flex size-10 shrink-0 items-center justify-center rounded-full border border-[#dcdce0] bg-white"><svg className="size-5" viewBox="0 0 20 20" {...s} stroke="#b5b5ba"><path d="M19 10H2M9 2.500L1.500 10 9 17.500" /></svg></div>
      <div className="flex w-10 shrink-0 justify-center"><svg className="size-5" viewBox="0 0 20 20" {...s} stroke="#b0b0b5"><path d="M1 10h17M11 2.500L18.500 10 11 17.500" /></svg></div>
      <div className="flex w-[38px] shrink-0 justify-center"><svg className="size-5" viewBox="0 0 20 20" {...s} strokeWidth="2.500"><path d="M17 13A7.500 7.500 0 1 1 15 5l2 2" /><path d="M18.500 1v8h-8z" fill="#4a4a4f" stroke="none" /></svg></div>
      <div className="flex w-9 shrink-0 justify-center"><svg className="size-5" viewBox="0 0 20 20" {...s}><path d="M1 10.500L10 2l9 8.500M3.500 9v9.500h13V9" /><path d="M8 18v-6h4v6" /></svg></div>
      <div className="ml-[128px] flex h-[35px] w-[1059px] shrink-0 items-center border border-[#bcbcc2] bg-white pl-[9px]">
        <svg className="h-[17px] w-[15px]" viewBox="0 0 15 17" {...s} strokeWidth="1.800"><path d="M7.500 1L14 3q0 10-6.500 13Q1 13 1 3z" /><path d="M7.500 5v7" strokeWidth="2.500" /></svg>
        <i className="ml-2.5 h-7 w-px bg-[#dedee2]" />
        <svg className="ml-[9px] h-[17px] w-[15px]" viewBox="0 0 15 17"><rect y="7" width="15" height="10" rx="1.500" fill="#4e4e53" /><path d="M3.500 8V5a4 4 0 0 1 8 0v3" fill="none" stroke="#4e4e53" strokeWidth="2.200" /></svg>
        <Fit className="ml-[11px] w-[55px] text-[#8a8a90]">https://</Fit>
        <Fit className="w-[121px] text-[#1f1f23]">learningapps.org</Fit>
        <Fit className="w-[105px] text-[#8a8a90]">/view5279457</Fit>
        <svg className="ml-[612px] h-1 w-5" viewBox="0 0 20 4" fill="#4a4a4f"><circle cx="2.500" cy="2" r="2" /><circle cx="10" cy="2" r="2" /><circle cx="17.500" cy="2" r="2" /></svg>
        <svg className="ml-[14px] h-[17px] w-[19px]" viewBox="0 0 19 17" {...s}><path d="M1.500 1.500h16v6q0 8-8 8t-8-8zM5.500 6l4 4 4-4" /></svg>
        <svg className="ml-3.5 size-5" viewBox="0 0 20 20" {...s}><path d="M10 1.500l2.600 5.600 6 .7-4.500 4.100 1.300 6-5.400-3-5.400 3 1.300-6L1.400 7.800l6-.7z" /></svg>
      </div>
      <div className="ml-[125px] flex w-10 shrink-0 justify-center"><svg className="h-[17px] w-[19px]" viewBox="0 0 19 17" {...s}><path d="M1.500 1v15M5.500 1v15M9.500 1v15M12.500 1l5 15" /></svg></div>
      <div className="flex w-9 shrink-0 justify-center"><svg className="h-[17px] w-[19px]" viewBox="0 0 19 17" {...s}><rect x="1" y="1" width="17" height="15" rx="2" /><path d="M9 1v15M4 5h3M4 8h3M4 11h3" strokeWidth="1.500" /></svg></div>
      <div className="relative flex w-[42px] shrink-0 justify-center"><svg className="size-[18px]" viewBox="0 0 18 18"><circle cx="9" cy="9" r="8" fill="none" stroke="#4a4a4f" strokeWidth="1.500" /><circle cx="9" cy="7" r="3.500" fill="#4a4a4f" /><path d="M3.500 13q5.500-4 11 0-5.500 4.500-11 0z" fill="#4a4a4f" /></svg><i className="absolute -top-[3px] right-2 size-[7px] rounded-full bg-[#2ba6ea]" /></div>
      <i className="ml-0.5 h-10 w-px bg-[#e0e0e4]" />
      <div className="flex flex-1 justify-center"><svg className="h-4 w-[15px]" viewBox="0 0 15 16"><path d="M0 2h15M0 8h15M0 14h15" stroke="#4a4a4f" strokeWidth="2.200" /></svg></div>
    </div>
  );
}

type Gap = { w: string; v: string; look?: "blue" | "focus" | "cut" };
const lines: { top: string; parts: (string | Gap)[] }[] = [
  { top: "", parts: ["1. Für die Rückfahrt ", { w: "w-[97px]", v: "haben" }, " wir zwei Stunden ", { w: "w-[133px]", v: "gerechnet" }, ". (rechnen)"] },
  { top: "mt-[5px]", parts: ["2. Die Kinder ", { w: "w-[97px]", v: "haben" }, " tolle Figuren aus Stroh ", { w: "w-[134px]", v: "gebastelt" }, ". (basteln)"] },
  { top: "mt-[3px]", parts: ["3. Wir ", { w: "w-[97px]", v: "haben" }, " zu diesem Thema hundert Kinder ", { w: "w-[115px]", v: "gefragt" }, ". (fragen)"] },
  { top: "mt-[4px]", parts: ["4. Wie lange ", { w: "w-[79px]", v: "hat" }, " es ", { w: "w-[124px]", v: "gedauert" }, "? (dauern)"] },
  { top: "mt-[3px]", parts: ["5. Ich ", { w: "w-[89px]", v: "habe" }, " hart ", { w: "w-[124px]", v: "gekämpft" }, ", um so weit zu kommen. (kämpfen)"] },
  { top: "mt-[4px]", parts: ["6. Der Mann ", { w: "w-[79px]", v: "" }, " den Hund an die Kette ", { w: "w-[107px]", v: "" }, ". (legen)"] },
  { top: "mt-[5px]", parts: ["7. Russische Flugzeuge ", { w: "w-[97px]", v: "haben" }, " die Stadt ", { w: "w-[151px]", v: "bombardiert" }, ". (bombardieren)"] },
  { top: "mt-[4px]", parts: ["8. Jürgen und Markus, ", { w: "w-[88px]", v: "seid" }, " ihr viel ", { w: "w-[115px]", v: "gereist", look: "blue" }, "? (reisen)"] },
  { top: "mt-[3px]", parts: ["9. Die Supermärkte ", { w: "w-[98px]", v: "sind/haben", look: "cut" }, " sonntags und an den Feiertagen ", { w: "w-[124px]", v: "geöffnet", look: "blue" }, ". (öffnen)"] },
  { top: "mt-[4px]", parts: ["10. Und was ", { w: "w-[79px]", v: "hat" }, " deine Freundin dazu ", { w: "w-[107px]", v: "gesagt", look: "focus" }, "? (sagen)"] },
];

const looks = {
  plain: "border-[#c9c4cc] pl-1.5",
  blue: "border-[#b0cbe0] pl-1.5",
  cut: "border-[#b0cbe0] justify-end",
  focus: "border-[#62aee6] pl-1.5 shadow-[0_0_6px_#86c5e8]",
};

function Exercise() {
  return (
    <div className={`ml-[115px] mt-[93px] text-[20.150px] text-[#4b4534] ${ARIAL}`}>
      {lines.map((l, i) => (
        <div key={i} className={`flex h-[30px] items-center whitespace-pre ${l.top}`}>
          {l.parts.map((p, j) =>
            typeof p === "string" ? (
              <span key={j}>{p}</span>
            ) : (
              <span key={j} className={`mr-px flex h-[30px] shrink-0 items-center rounded-[4px] border bg-[#fffefe] text-[#66656c] ${p.w} ${looks[p.look ?? "plain"]}`}>
                <span className={p.look === "cut" ? "flex w-[90px] justify-end overflow-hidden" : ""}>{p.v}</span>
              </span>
            ),
          )}
        </div>
      ))}
    </div>
  );
}

const paper =
  "bg-[radial-gradient(circle_at_1399px_158px,#fbe08aaa_0,#fde79a66_12px,#fde79a00_36px),radial-gradient(circle_at_720px_625px,#fbe196aa_0,#fde79a55_16px,#fde79a00_40px),radial-gradient(circle_at_812px_700px,#eadb90_0,#fbe59a77_6px,#fbe59a00_26px),radial-gradient(circle_at_838px_574px,#fce4a088_0,#fce4a000_16px),radial-gradient(circle_at_672px_770px,#fbe3a077_0,#fbe3a000_32px),radial-gradient(ellipse_at_215px_430px,#fde79f99_0,#fde79f00_90px),radial-gradient(circle_at_835px_92px,#fde6a266_0,#fde6a200_24px),radial-gradient(circle_at_8px_124px,#fbe39a99_0,#fbe39a00_22px),radial-gradient(circle_at_1632px_124px,#fbe39a88_0,#fbe39a00_22px),radial-gradient(circle_at_1440px_240px,#fde9a277_0,#fde9a200_130px),radial-gradient(circle_at_168px_520px,#d9cf98_0,#d9cf9800_5px),radial-gradient(circle_at_754px_520px,#d9cf98_0,#d9cf9800_5px),radial-gradient(circle_at_761px_643px,#ddd19a_0,#ddd19a00_5px),radial-gradient(circle_at_754px_63px,#e9db9f_0,#e9db9f00_5px),radial-gradient(ellipse_at_720px_700px,#feeca8aa_0,#feeca800_160px),linear-gradient(90deg,#fdeeb5,#fef0b6_50%,#feefb8)]";

function SharedWindow() {
  return (
    <div className="flex w-[1639px] shrink-0 flex-col">
      <FoxTabs />
      <FoxNav />
      <div className={`relative h-[785px] overflow-hidden ${paper}`}>
        <svg className="absolute left-0 top-0 h-6 w-[22px]" viewBox="0 0 22 24"><rect x=".5" y="1" width="14" height="14" fill="#d8e9fa" stroke="#3c4c74" strokeWidth="1.500" /><path d="M9.500 7q0-4.500 4.500-4.500T18.500 7q0 3-2.500 4.500-1.500 1-1.500 4" fill="none" stroke="#2e7d2e" strokeWidth="4" /><path d="M9.500 7q0-4.500 4.500-4.500T18.500 7q0 3-2.500 4.500-1.500 1-1.500 4" fill="none" stroke="#5bb548" strokeWidth="2" /><circle cx="14.800" cy="20" r="2.300" fill="#3f9a36" /></svg>
        <svg className="absolute right-0.5 top-0.5 size-4" viewBox="0 0 16 16"><rect width="16" height="16" fill="#e6dfe0" /><path d="M1 1l4.500 4.500M15 1l-4.500 4.500M1 15l4.500-4.500M15 15l-4.500-4.500" stroke="#a8283c" strokeWidth="2" fill="none" /><path d="M6.500 2.500v4h-4zM9.500 2.500v4h4zM6.500 13.500v-4h-4zM9.500 13.500v-4h4z" fill="#a8283c" /></svg>
        <Exercise />
        <svg className="absolute left-[587px] top-[531px] h-6 w-4" viewBox="0 0 16 24"><path d="M1 1v20l5-4.500 3 6.500 3-1.500-3-6h5.500z" fill="#fffafa" stroke="#3b3336" strokeWidth="1.200" /></svg>
        <div className="absolute left-[1565px] top-[711px] flex size-[58px] items-center justify-center rounded-full bg-linear-to-b from-[#35a0ea] to-[#2a6fd6] shadow-[0_1px_2px_#8a7a50]">
          <svg className="mb-1 size-6" viewBox="0 0 24 24" fill="none" stroke="#fff" strokeWidth="3.600"><path d="M15 2.500H6Q2 2.500 2 6.500v11q0 4 4 4h11q4 0 4-4V14" /><path d="M8.500 9.500l4 4.500L23 4" /></svg>
        </div>
      </div>
      <div className="flex-1 bg-[#2b292c]" />
    </div>
  );
}

function Meeting() {
  return (
    <main className="relative flex min-h-0 flex-1 bg-white">
      <div className="flex w-[107px] shrink-0 justify-center pr-[11px] pt-[18px]">
        <div className="flex size-[50px] items-center justify-center rounded-full border-[1.500px] border-[#e9e9e9]">
          <svg className="size-[19px]" viewBox="0 0 19 19"><circle cx="9.500" cy="9.500" r="8.500" fill="none" stroke="#111" strokeWidth="1.600" /><path d="M9.500 8.500V14" stroke="#111" strokeWidth="1.600" /><circle cx="9.500" cy="5.800" r="1" fill="#111" /></svg>
        </div>
      </div>
      <SharedWindow />
      <div className={`absolute left-[702px] top-[11px] flex h-[54px] w-[423px] items-center rounded-full border-2 border-[#e4e4e6] bg-white/80 pl-3.5 text-[20px] text-black ${ARIAL}`}>
        <Fit className="w-[383px]">Anzeigen der Anwendung von Simone …</Fit>
      </div>
      <div className={`absolute left-[1418px] top-[57px] flex h-[42px] gap-[3px] text-[18px] text-white ${ARIAL}`}>
        <div className="flex w-[46px] items-center justify-center rounded-l bg-black/20"><svg className="size-[17px]" viewBox="0 0 17 17"><path d="M1 2v13M17 8.500H5M10 3L4.500 8.500 10 14" fill="none" stroke="#fff" strokeWidth="1.600" /></svg></div>
        <div className="flex w-[311px] items-center rounded-r bg-black/20 pl-[10px]">Es spricht:</div>
      </div>
      <div className="absolute left-[891px] top-[822px] flex size-[78px] items-center justify-center rounded-full border-2 border-[#f0432c] bg-[#fb6a50]/15">
        <svg className="h-[32px] w-[26px]" viewBox="0 0 26 32" fill="none" stroke="#f0452f" strokeWidth="1.700"><rect x="6.500" y="1" width="13" height="25" rx="6.500" /><path d="M1 26L25 2M13 26v4M8.500 30.500h9" /></svg>
      </div>
    </main>
  );
}

export default function App() {
  return (
    <div className="flex h-[1080px] w-[1920px] flex-col overflow-hidden bg-white">
      <TopBar />
      <div className="flex min-h-0 flex-1">
        <Dock />
        <div className="flex w-[1853px] shrink-0 flex-col">
          <TitleBar />
          <TabStrip />
          <Toolbar />
          <Bookmarks />
          <Meeting />
        </div>
      </div>
    </div>
  );
}
